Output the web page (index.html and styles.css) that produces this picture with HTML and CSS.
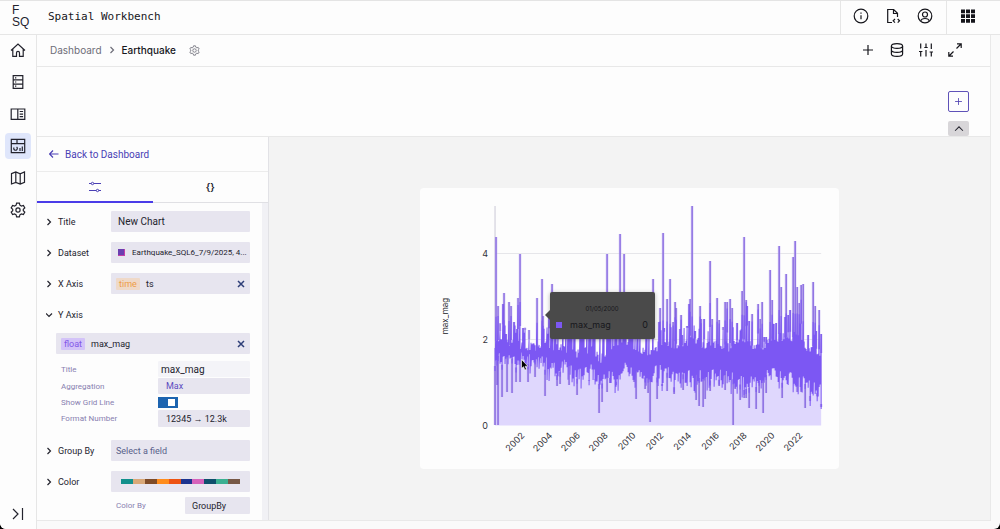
FILE: index.html
```html
<!DOCTYPE html>
<html lang="en">
<head>
    <meta charset="UTF-8">
    <meta name="viewport" content="width=device-width, initial-scale=1.0">
    <title>Spatial Workbench</title>
    <link rel="stylesheet" href="styles.css">
</head>
<body>
<div class="app">
    <header class="topbar">
        <a href="#" class="logo" aria-label="FSQ home"><span>F</span><span>SQ</span></a>
        <h1>Spatial Workbench</h1>
        <div class="topbar-group">
            <button aria-label="Info"><svg viewBox="0 0 16 16"><circle cx="8" cy="8" r="6.8"/><path d="M8 7.3v4M8 4.6v1.2"/></svg></button>
            <button aria-label="Docs"><svg viewBox="0 0 16 16"><path d="M7 14.500H2.700V1.500h6l3.800 3.800v3.700M8.500 1.500v4h4M10 11l-1.800 1.800 1.800 1.800M12.700 11l1.800 1.800-1.800 1.800"/></svg></button>
            <button aria-label="Account"><svg viewBox="0 0 16 16"><circle cx="8" cy="8" r="6.800"/><circle cx="8" cy="6.500" r="2.500"/><path d="M3.800 13c.4-2 1.700-2.500 4.200-2.500s3.800.5 4.200 2.500"/></svg></button>
        </div>
        <div class="topbar-apps">
            <button aria-label="Apps"><svg viewBox="0 0 16 16" class="solid"><path d="M1 1.500h4v3.800H1zM6 1.500h4v3.800H6zM11 1.500h4v3.800h-4zM1 6.200h4V10H1zM6 6.200h4V10H6zM11 6.200h4V10h-4zM1 10.900h4v3.800H1zM6 10.900h4v3.800H6zM11 10.900h4v3.800h-4z"/></svg></button>
        </div>
    </header>

    <div class="body">
        <nav class="sidebar">
            <a href="#" aria-label="Home"><svg viewBox="0 0 16 16"><path d="M1 8.500 8 2l7 6.500M2.800 7v7.300h3.700v-3.500a1.500 1.500 0 0 1 3 0v3.500h3.700V7"/></svg></a>
            <a href="#" aria-label="Data"><svg viewBox="0 0 16 16"><path d="M3.200 1.700h9.600v12.600H3.200zM3.200 5.900h9.600M3.200 10.100h9.600M5 3.800h1.300M5 8h1.300M5 12.200h1.300"/></svg></a>
            <a href="#" aria-label="Catalog"><svg viewBox="0 0 16 16"><path d="M1.200 3h13.600v10.300H1.200zM7.800 3v10.300M9.700 5.500h3.400M9.700 8.100h3.400M9.700 10.700h3.400"/></svg></a>
            <a href="#" class="active" aria-label="Dashboards"><svg viewBox="0 0 16 16"><path d="M1.300 1.300h13.400v13.400H1.300zM1.300 5.700h13.400M7 1.300v4.400M3.800 9.500v1.500a1.800 1.800 0 1 0 2.800-2M10 13v-3M12.300 13V8.500"/></svg></a>
            <a href="#" aria-label="Maps"><svg viewBox="0 0 16 16"><path d="M1.500 3.600 5.800 2l4.400 1.800L14.500 2v10.400L10.200 14l-4.400-1.600L1.500 14zM5.800 2v10.400M10.200 3.800V14"/></svg></a>
            <a href="#" aria-label="Settings"><svg viewBox="0 0 16 16"><path d="M6.600 1.200h2.800l.5 2 1.500.9 2-.6 1.400 2.400-1.500 1.400v1.400l1.500 1.400-1.400 2.400-2-.6-1.500.9-.5 2H6.600l-.5-2-1.500-.9-2 .6-1.400-2.400 1.500-1.400V7.300L1.200 5.900l1.400-2.400 2 .6 1.500-.9z"/><circle cx="8" cy="8" r="2.100"/></svg></a>
            <button class="expand" aria-label="Expand sidebar"><svg viewBox="0 0 16 16"><path d="m3 3 5 5-5 5M12.500 2v12"/></svg></button>
        </nav>

        <main class="main">
            <div class="crumbs">
                <a href="#">Dashboard</a>
                <svg viewBox="0 0 8 8" class="sep"><path d="m2.500 1 3 3-3 3"/></svg>
                <strong>Earthquake</strong>
                <button class="gear" aria-label="Dashboard settings"><svg viewBox="0 0 16 16"><path d="M6.600 1.200h2.800l.5 2 1.500.9 2-.6 1.400 2.400-1.500 1.400v1.400l1.500 1.400-1.400 2.400-2-.6-1.500.9-.5 2H6.600l-.5-2-1.500-.9-2 .6-1.400-2.400 1.500-1.400V7.300L1.200 5.900l1.400-2.400 2 .6 1.500-.9z"/><circle cx="8" cy="8" r="2.500"/></svg></button>
                <div class="tools">
                    <button aria-label="Add"><svg viewBox="0 0 16 16"><path d="M8 3v10M3 8h10"/></svg></button>
                    <button aria-label="Datasets"><svg viewBox="0 0 16 16"><ellipse cx="8" cy="4" rx="5.600" ry="2.400"/><path d="M2.400 4v8c0 1.300 2.500 2.400 5.600 2.400s5.600-1.100 5.600-2.400V4M2.400 8c0 1.300 2.500 2.400 5.600 2.400s5.600-1.100 5.600-2.400"/></svg></button>
                    <button aria-label="Filters"><svg viewBox="0 0 16 16"><path d="M2.700 1.500v5M2.700 9.500v5M8 1.500v4M8 8v6.500M13.300 1.500v5.500M13.300 10v4.500M1 9.500h3.400M6.300 5.500h3.400M11.600 10H15"/></svg></button>
                    <button aria-label="Full screen"><svg viewBox="0 0 16 16"><path d="M9.500 6.500 14 2M10 1.800h4.200V6M6.500 9.500 2 14M1.800 10v4.200H6"/></svg></button>
                </div>
            </div>

            <div class="strip">
                <button class="add" aria-label="Add widget"><svg viewBox="0 0 16 16"><path d="M8 3v10M3 8h10"/></svg></button>
                <button class="collapse" aria-label="Collapse"><svg viewBox="0 0 16 16"><path d="m3.500 10 4.500-4.500 4.500 4.500"/></svg></button>
            </div>

            <div class="workspace">
                <section class="panel">
                    <a href="#" class="back"><svg viewBox="0 0 10 10"><path d="M9.500 5h-9M4 1.500.5 5 4 8.500"/></svg>Back to Dashboard</a>
                    <div class="tabs">
                        <button class="tab active" aria-label="Options"><svg viewBox="0 0 12 12"><path d="M0 2.500h2.300M4.700 2.500H12M0 9.500h7.300M9.700 9.500H12"/><circle cx="3.500" cy="2.500" r="1.200"/><circle cx="8.500" cy="9.500" r="1.200"/></svg></button>
                        <button class="tab">{}</button>
                    </div>

                    <div class="fields">
                        <div class="row">
                            <label for="title"><svg viewBox="0 0 8 8"><path d="m1.500 1 3 3-3 3"/></svg>Title</label>
                            <input id="title" class="box big" type="text" value="New Chart">
                        </div>
                        <div class="row">
                            <label for="dataset"><svg viewBox="0 0 8 8"><path d="m1.500 1 3 3-3 3"/></svg>Dataset</label>
                            <button id="dataset" class="box"><i class="swatch"></i><span class="name">Earthquake_SQL6_7/9/2025, 4...</span></button>
                        </div>
                        <div class="row">
                            <span class="label"><svg viewBox="0 0 8 8"><path d="m1.500 1 3 3-3 3"/></svg>X Axis</span>
                            <div class="box"><em class="tag time">time</em>ts<button class="clear" aria-label="Remove ts"><svg viewBox="0 0 8 8"><path d="m1 1 6 6M7 1 1 7"/></svg></button></div>
                        </div>
                        <div class="row open">
                            <span class="label"><svg viewBox="0 0 8 8"><path d="m0 2.500 3 3 3-3"/></svg>Y Axis</span>
                        </div>
                        <div class="box measure"><em class="tag float">float</em>max_mag<button class="clear" aria-label="Remove max_mag"><svg viewBox="0 0 8 8"><path d="m1 1 6 6M7 1 1 7"/></svg></button></div>

                        <div class="details">
                            <label for="y-title">Title</label>
                            <input id="y-title" class="box pale" type="text" value="max_mag">
                            <label for="aggregation">Aggregation</label>
                            <select id="aggregation" class="box violet"><option>Max</option></select>
                            <label for="grid-line">Show Grid Line</label>
                            <input id="grid-line" class="toggle" type="checkbox" checked>
                            <label for="format">Format Number</label>
                            <select id="format" class="box"><option>12345 → 12.3k</option></select>
                        </div>

                        <div class="row">
                            <label for="group"><svg viewBox="0 0 8 8"><path d="m1.500 1 3 3-3 3"/></svg>Group By</label>
                            <select id="group" class="box empty"><option>Select a field</option></select>
                        </div>
                        <div class="row last">
                            <label for="palette"><svg viewBox="0 0 8 8"><path d="m1.500 1 3 3-3 3"/></svg>Color</label>
                            <button id="palette" class="box palette"><i class="c1"></i><i class="c2"></i><i class="c3"></i><i class="c4"></i><i class="c5"></i><i class="c6"></i><i class="c7"></i><i class="c8"></i><i class="c9"></i><i class="c10"></i></button>
                        </div>
                        <div class="color-by">
                            <label for="color-by">Color By</label>
                            <select id="color-by" class="box"><option>GroupBy</option></select>
                        </div>
                    </div>
                </section>

                <section class="canvas">
                    <div class="card">
                        <svg id="chart" class="chart" viewBox="420 188 418 281" role="img" aria-label="max_mag by ts"></svg>
                        <div class="tooltip">
                            <div class="date">01/05/2000</div>
                            <div class="value"><i></i>max_mag<b>0</b></div>
                        </div>
                        <svg class="cursor" viewBox="0 0 8 12"><path d="M.5.5v9l2-1.800 1.400 3.300 1.600-.7-1.400-3.100h2.800z"/></svg>
                    </div>
                </section>
            </div>
        </main>
    </div>
</div>
<script src="chart.js"></script>
</body>
</html>
```
FILE: styles.css
```css
* {
    box-sizing: border-box;
}
html {
    background: #000;
}
body {
    margin: 0;
    font-family: Roboto, "Noto Sans", sans-serif;
    font-size: 10px;
    color: #23232d;
}
button, input, select {
    font: inherit;
    color: inherit;
    margin: 0;
    padding: 0;
    border: 0;
    background: none;
    border-radius: 0;
}
button {
    cursor: pointer;
}
a {
    color: inherit;
    text-decoration: none;
}
svg {
    display: block;
    width: 16px;
    height: 16px;
    fill: none;
    stroke: currentColor;
    stroke-width: 1.2;
}
.solid {
    fill: currentColor;
    stroke: none;
}
.app {
    display: flex;
    flex-direction: column;
    height: 100vh;
    background: #fafafa;
    border-top: 1px solid #e4e4e4;
    border-radius: 0 0 6px 6px;
    overflow: hidden;
}

/* top bar */
.topbar {
    display: flex;
    align-items: center;
    flex: 0 0 34px;
    background: #fdfdfd;
    border-bottom: 1px solid #e6e6e6;
}
.logo {
    width: 48px;
    padding: 0 0 3px 12px;
    font-family: "Liberation Sans", sans-serif;
    font-size: 12px;
    line-height: 12px;
}
.logo span {
    display: block;
}
h1 {
    flex: 1;
    margin: 0 0 2px;
    font-family: "DejaVu Sans Mono", monospace;
    font-size: 11px;
    font-weight: normal;
    color: #16161c;
}
.topbar-group, .topbar-apps {
    display: flex;
    align-items: center;
    justify-content: center;
    gap: 16px;
    align-self: stretch;
    width: 106px;
    padding: 0 2px 3px 0;
    border-left: 1px solid #e6e6e6;
    color: #16161c;
}
.topbar-apps {
    width: 54px;
    padding-right: 12px;
}

/* sidebar */
.body {
    display: flex;
    flex: 1;
    min-height: 0;
}
.sidebar {
    display: flex;
    flex-direction: column;
    align-items: center;
    gap: 6px;
    width: 37px;
    padding: 2px 1px 2px 0;
    background: #fdfdfd;
    border-right: 1px solid #e6e6e6;
}
.sidebar a, .expand {
    display: flex;
    align-items: center;
    justify-content: center;
    width: 26px;
    height: 26px;
    border-radius: 4px;
}
.sidebar .active {
    background: #dfe6fb;
}
.sidebar .expand {
    margin-top: auto;
}

/* main */
.main {
    display: flex;
    flex-direction: column;
    flex: 1;
    min-width: 0;
    margin: 0 9px 8px 0;
    background: #fdfdfd;
    border: solid #e9e9e9;
    border-width: 0 1px 1px 0;
}
.crumbs {
    display: flex;
    align-items: center;
    flex: 0 0 32px;
    padding: 0 27px 1px 13px;
    border-bottom: 1px solid #e8e8e8;
    font-family: Inter, sans-serif;
    color: #6d6d78;
}
.crumbs strong {
    font-weight: 500;
    color: #16161c;
}
.sep {
    width: 8px;
    height: 8px;
    margin: 0 6px;
}
.crumbs .gear {
    margin-left: 13px;
}
.gear svg {
    width: 11px;
    height: 11px;
}
.tools {
    display: flex;
    gap: 13px;
    margin-left: auto;
    color: #16161c;
}
.strip {
    display: flex;
    flex-direction: column;
    align-items: flex-end;
    gap: 9px;
    padding: 24px 21px 0 0;
    border-bottom: 1px solid #e8e8e8;
}
.add, .collapse {
    display: flex;
    align-items: center;
    justify-content: center;
    width: 21px;
    height: 21px;
    border: 1px solid #5f52b8;
    border-radius: 2px;
    color: #4c3fb0;
}
.add svg {
    width: 11px;
    height: 11px;
}
.collapse {
    height: 15px;
    border: 0;
    background: #d8d6d9;
    color: #23232d;
}
.collapse svg {
    width: 14px;
    height: 14px;
}
.workspace {
    display: flex;
    flex: 1;
    min-height: 0;
}

/* chart settings */
.panel {
    display: flex;
    flex-direction: column;
    flex: 0 0 232px;
    border-right: 1px solid #e2e2e6;
}
.back {
    display: flex;
    align-items: center;
    gap: 6px;
    flex: 0 0 35px;
    padding-left: 12px;
    border-bottom: 1px solid #ececec;
    color: #4a3fb5;
}
.back svg {
    width: 10px;
    height: 10px;
}
.tabs {
    display: flex;
    flex: 0 0 31px;
    border-bottom: 1px solid #e0e0e4;
}
.tab {
    display: flex;
    align-items: center;
    justify-content: center;
    flex: 1;
    margin-bottom: -1px;
    border-bottom: 2px solid transparent;
    font-family: Inter, sans-serif;
    font-weight: 600;
}
.tab.active {
    border-bottom-color: #4a3ce8;
    color: #4a3fb5;
}
.tab svg {
    width: 12px;
    height: 12px;
    stroke-width: 1;
}
.fields {
    flex: 1;
    min-height: 0;
    overflow: hidden;
    padding: 8px 12px 0 9px;
    border-right: 6px solid #f1f1f5;
    font-size: 9px;
}
.row {
    display: grid;
    grid-template-columns: 65px minmax(0, 1fr);
    align-items: center;
    min-height: 21px;
    margin-bottom: 10px;
}
.row label, .label {
    display: flex;
    align-items: center;
    gap: 4px;
}
.row label svg, .label svg {
    width: 8px;
    height: 8px;
}
.box {
    display: flex;
    align-items: center;
    width: 100%;
    height: 21px;
    padding: 0 5px;
    background: #e7e5ef;
    border-radius: 1px;
    text-align: left;
    appearance: none;
}
.big {
    padding: 0 7px;
    font-size: 10px;
}
.swatch {
    flex: 0 0 7px;
    height: 7px;
    margin: 0 7px 0 2px;
    background: #6a3fb0;
    border: solid #c23fa8;
    border-width: 0 1px 1px 0;
}
.name {
    font-size: 8px;
    white-space: nowrap;
}
.tag {
    width: 24px;
    margin-right: 6px;
    border-radius: 1px;
    font-style: normal;
    font-size: 9px;
    line-height: 12px;
    text-align: center;
}
.time {
    background: #efd9c8;
    color: #ee9c45;
}
.float {
    background: #d3c3f8;
    color: #8257e8;
}
.clear {
    margin-left: auto;
    color: #2f3f78;
}
.clear svg {
    width: 8px;
    height: 8px;
    stroke-width: 1.5;
}
.open {
    margin-bottom: 8px;
}
.measure {
    width: auto;
    margin-left: 10px;
}
.details {
    display: grid;
    grid-template-columns: 97px minmax(0, 1fr);
    grid-template-rows: 16px 16px 14px 17px;
    align-items: center;
    gap: 1px 0;
    margin: 7px 0 13px 15px;
}
.details label, .color-by label {
    font-size: 8px;
    color: #8880b0;
}
.details .box {
    height: 100%;
    padding: 0 8px;
}
.details .pale {
    padding: 0 3px;
    background: #f4f4f8;
    font-size: 10px;
}
.details .violet {
    color: #5b4bc0;
}
.toggle {
    appearance: none;
    width: 20px;
    height: 11px;
    background: #1c64b0;
    border: 2px solid #1c64b0;
    cursor: pointer;
}
.toggle::before {
    content: "";
    display: block;
    width: 7px;
    height: 7px;
    margin-left: auto;
    margin-right: 1px;
    background: #fff;
}
.empty {
    color: #585f8a;
}
.last {
    margin-bottom: 5px;
}
.palette {
    padding: 0 10px;
}
.palette i {
    flex: 1;
    height: 5px;
}
.c1 { background: #12908c; }
.c2 { background: #d9a878; }
.c3 { background: #7f4b27; }
.c4 { background: #ff8c1c; }
.c5 { background: #ee5312; }
.c6 { background: #1d3490; }
.c7 { background: #d662bb; }
.c8 { background: #0e4f6c; }
.c9 { background: #3bb092; }
.c10 { background: #775846; }
.color-by {
    display: grid;
    grid-template-columns: 69px minmax(0, 1fr);
    align-items: center;
    margin-left: 70px;
}
.color-by .box {
    height: 17px;
    padding: 0 7px;
}

/* chart */
.canvas {
    display: flex;
    align-items: center;
    justify-content: center;
    flex: 1;
    min-width: 0;
    background: #f3f3f3;
}
.card {
    position: relative;
    width: 58%;
    background: #fdfdfd;
    border-radius: 4px;
}
.chart {
    width: 100%;
    height: auto;
    stroke: none;
}
.chart text {
    fill: #33333b;
    font-family: Inter, sans-serif;
    font-size: 9px;
}
.chart .axis-title {
    font-size: 8px;
    fill: #16161c;
}
.grid {
    stroke: #e6e6ea;
    stroke-width: 1;
}
.pointer {
    stroke: #cbc8d6;
    stroke-width: 1;
}
.area {
    fill: #dfd7fd;
}
.halo {
    stroke: #cdbffa;
    stroke-width: 3;
    opacity: 0.5;
}
.spikes {
    stroke: #8465df;
    stroke-width: 1.4;
}
.line {
    fill: none;
    stroke: #7c57f3;
    stroke-width: 1;
}
.tooltip {
    position: absolute;
    left: 31%;
    top: 37%;
    width: 105px;
    height: 47px;
    padding: 12px 7px 0 6px;
    background: #4a4a4a;
    border-radius: 2px;
    box-shadow: 0 1px 4px rgba(0, 0, 0, 0.3);
    font-family: Inter, sans-serif;
    color: #17171c;
}
.tooltip::before {
    content: "";
    position: absolute;
    left: -5px;
    top: 18px;
    border: solid transparent;
    border-width: 5px 5px 5px 0;
    border-right-color: #4a4a4a;
}
.date {
    font-size: 6px;
    line-height: 9px;
    text-align: center;
}
.value {
    display: flex;
    align-items: center;
    margin-top: 5px;
    font-size: 9px;
    line-height: 14px;
}
.value i {
    width: 6px;
    height: 6px;
    margin-right: 8px;
    background: #7c57f3;
}
.value b {
    margin-left: auto;
    font-weight: normal;
}
.cursor {
    position: absolute;
    left: 24%;
    top: 61%;
    width: 8px;
    height: 12px;
    fill: #000;
    stroke: #fff;
    stroke-width: 0.6;
}
```
FILE: chart.js
```js
const chart = document.getElementById('chart');
const left = 495, right = 821, zero = 425.5;

// highs and lows that stand out of the band: [x, y]
const peaks = [[496,237],[498,306],[500,331],[503,304],[504,293],[506,334],[509,302],[511,306],[514,322],[517,329],[518,298],[520,254],[523,328],[525,330],[529,339],[537,298],[542,279],[543,316],[549,316],[552,284],[607,254],[620,234],[624,254],[653,279],[659,322],[660,308],[663,233],[664,328],[667,299],[670,279],[673,322],[675,302],[676,308],[680,329],[681,315],[682,335],[687,326],[689,304],[690,299],[692,206],[695,331],[700,306],[701,319],[704,319],[710,261],[712,319],[717,298],[719,320],[723,330],[725,302],[727,302],[730,299],[732,308],[737,323],[742,291],[744,237],[746,300],[747,306],[749,321],[752,314],[758,304],[760,319],[762,302],[764,337],[766,337],[770,270],[772,300],[776,323],[779,246],[781,287],[785,317],[786,274],[788,315],[790,310],[793,257],[795,241],[797,287],[799,303],[801,285],[803,284],[808,335],[813,282],[815,306],[816,331],[819,310],[821,334]];
const dips = [[495,425],[497,385],[498,425],[502,397],[507,392],[512,393],[516,382],[520,382],[528,382],[535,377],[545,396],[557,386],[560,384],[569,385],[577,395],[589,381],[595,380],[599,413],[602,402],[607,392],[610,383],[616,385],[634,382],[636,399],[645,389],[648,393],[650,422],[657,399],[662,384],[667,391],[674,394],[683,390],[696,400],[699,406],[703,407],[705,399],[710,391],[719,386],[725,390],[733,425],[735,389],[740,400],[744,398],[746,398],[749,408],[756,409],[759,393],[763,413],[766,393],[782,398],[797,392],[801,392],[805,408],[810,396],[817,393],[821,407]];

// edges of the dense band: [x, top, bottom]
const band = [[495,344,360],[510,345,358],[525,346,360],[537,349,362],[550,346,365],[558,350,372],[565,350,364],[577,354,376],[585,350,368],[592,350,372],[600,360,380],[608,352,376],[616,347,376],[628,347,366],[634,355,375],[640,350,366],[650,356,378],[658,346,370],[668,344,374],[680,348,380],[692,340,376],[705,345,376],[718,345,374],[730,348,378],[745,340,384],[758,350,382],[770,344,374],[785,336,378],[797,338,380],[808,350,386],[821,352,391]];

let seed = 7;
function random() {
    seed = (seed * 16807) % 2147483647;
    return seed / 2147483647;
}

function edges(x) {
    let i = 1;
    while (band[i][0] < x) i++;
    const [x0, top0, bottom0] = band[i - 1];
    const [x1, top1, bottom1] = band[i];
    const t = (x - x0) / (x1 - x0);
    return [top0 + (top1 - top0) * t, bottom0 + (bottom1 - bottom0) * t];
}

const highs = new Map(peaks);
const lows = new Map(dips);
let points = '';
let spikes = '';
for (let x = left; x <= right; x++) {
    let [high, low] = edges(x);
    high -= random() * 10 - 4;
    low += random() * 14 - 7;
    if (random() < 0.2) {
        high -= 16;
    }
    if (random() < 0.15) {
        low += 10;
    }
    // these years rise up under the tooltip
    if (x > 549 && x < 655 && random() < 0.45) {
        high = 322;
    }
    if (highs.has(x)) {
        const top = highs.get(x);
        spikes += `M${x} ${top}V${high}`;
        high = Math.max(top, high - 24);
    }
    if (lows.has(x)) {
        spikes += `M${x} ${low}V${lows.get(x)}`;
        low += 5;
    }
    points += `${x},${high} ${x},${low} `;
}

const labels = [];
for (let year = 2002, x = 525; year <= 2022; year += 2, x += 27.8) {
    labels.push(`<text text-anchor="end" transform="translate(${x} 436) rotate(-45)">${year}</text>`);
}

chart.innerHTML = `
    <path class="grid" d="M495 253.5H821M495 339.5H821"/>
    <polygon class="area" points="${left},${zero} ${points} ${right},${zero}"/>
    <path class="pointer" d="M495 206V425"/>
    <path class="halo" d="${spikes}"/>
    <path class="spikes" d="${spikes}"/>
    <polyline class="line" points="${points}"/>
    <text text-anchor="end" x="488" y="257">4</text>
    <text text-anchor="end" x="488" y="343">2</text>
    <text text-anchor="end" x="488" y="429">0</text>
    <text class="axis-title" text-anchor="middle" transform="translate(448 316) rotate(-90)">max_mag</text>
    ${labels.join('')}
`;
```
